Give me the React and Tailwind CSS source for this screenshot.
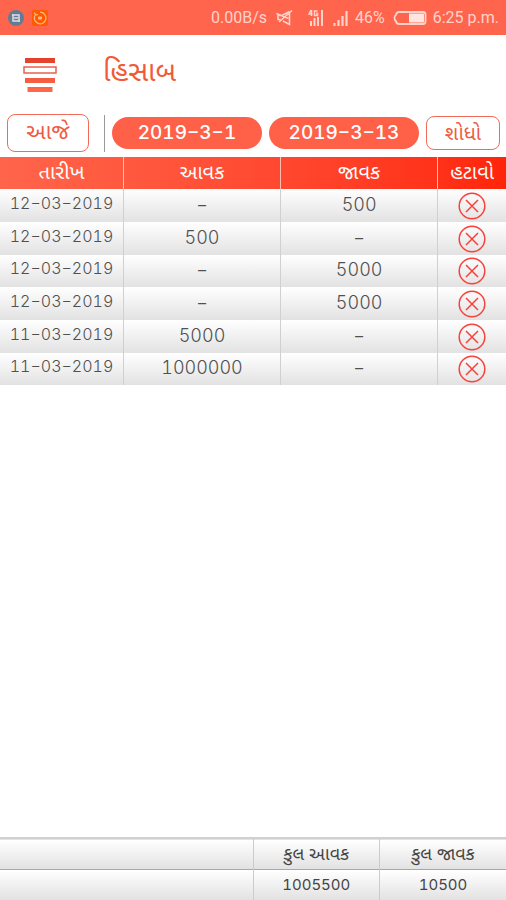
import React, { useState } from 'react';

const ENTRIES = [
  { id: 1, date: '12−03−2019', income: '−', expense: '500' },
  { id: 2, date: '12−03−2019', income: '500', expense: '−' },
  { id: 3, date: '12−03−2019', income: '−', expense: '5000' },
  { id: 4, date: '12−03−2019', income: '−', expense: '5000' },
  { id: 5, date: '11−03−2019', income: '5000', expense: '−' },
  { id: 6, date: '11−03−2019', income: '1000000', expense: '−' },
];

function sum(rows, key) {
  return rows.reduce((total, row) => total + (Number(row[key]) || 0), 0);
}

function StatusBar() {
  return (
    <div className="flex h-[35px] items-center bg-[#ff654d] pl-2 pr-[7px] pt-px font-[Roboto,sans-serif] text-base text-[#ffd3cb]">
      <svg className="h-4 w-4" viewBox="0 0 16 16" aria-hidden="true">
        <circle cx="8" cy="8" r="8" fill="#607d94" />
        <path d="M5 4v7h7M4 5h7v7M6 8h4" fill="none" stroke="#e3dce2" strokeWidth="1.5" />
      </svg>
      <svg className="ml-2 h-4 w-4" viewBox="0 0 16 16" aria-hidden="true">
        <rect width="16" height="16" rx="2" fill="#ff5a00" />
        <path d="M3.500 4.500A5.800 5.800 0 1 0 8 2.200M2.500 2.500l1 2.500 2.500-.5" fill="none" stroke="#ffb98c" strokeWidth="1.200" />
        <rect x="6" y="6.500" width="4" height="3" rx="1" fill="#ffb98c" />
      </svg>
      <span className="ml-auto">0.00B/s</span>
      <svg className="ml-2 h-[18px] w-[18px]" viewBox="0 0 18 18" fill="none" stroke="currentColor" strokeWidth="1.500" aria-hidden="true">
        <path d="M14.500 2.500v13L8 12M14.500 2.500L7 6.500H3v4h2.500M1.500 4.500l12 5M17 1.500L4 13" />
      </svg>
      <svg className="ml-[15px] h-[18px] w-4" viewBox="0 0 16 18" fill="none" stroke="currentColor" aria-hidden="true">
        <path d="M3 1L1 5h3.5M3.5 1v6M9.500 2H6.500v4.500h3V4.500H8" strokeWidth="1.500" />
        <path d="M3 12v5M6.500 9v8M10 8v9M14 1v16" strokeWidth="2" />
      </svg>
      <svg className="ml-[9px] h-[18px] w-4" viewBox="0 0 16 18" stroke="currentColor" strokeWidth="2.200" aria-hidden="true">
        <path d="M1.500 14v3M5.500 11v6M9.500 7v10M13.500 2v15" />
      </svg>
      <span className="ml-[6px]">46%</span>
      <svg className="ml-2 h-4 w-[34px]" viewBox="0 0 34 16" aria-hidden="true">
        <path d="M6 2h24q2.500 0 2.500 2.500v7q0 2.500-2.500 2.500H6q-2.500 0-3-3Q1.500 10.500 1.500 8T3 5q.5-3 3-3z" fill="none" stroke="currentColor" strokeWidth="1.800" />
        <path d="M16 3.500h15v9H16z" fill="#ffe5e0" />
      </svg>
      <span className="ml-[6px]">6:25 p.m.</span>
    </div>
  );
}

function DeleteIcon() {
  return (
    <svg className="h-7 w-7" viewBox="0 0 28 28" fill="none" stroke="#f8413c" strokeWidth="1.5" aria-hidden="true">
      <circle cx="14" cy="14" r="12.8" />
      <path d="M8 8l12 12M20 8L8 20" />
    </svg>
  );
}

export default function App() {
  const [entries, setEntries] = useState(ENTRIES);

  const removeEntry = (id) => setEntries(entries.filter((e) => e.id !== id));

  return (
    <div className="flex min-h-screen flex-col bg-white font-[Inter,'Noto_Sans_Gujarati','Lohit_Gujarati',sans-serif] tabular-nums">
      <StatusBar />

      <header className="flex h-[79px] items-center pl-[23px]">
        <button type="button" aria-label="Menu">
          <svg className="h-9 w-[34px]" viewBox="0 0 34 36" aria-hidden="true">
            <defs>
              <linearGradient id="menu" x1="0" y1="0" x2="0" y2="1">
                <stop offset="0" stopColor="#e2402a" />
                <stop offset="1" stopColor="#ff6a4b" />
              </linearGradient>
            </defs>
            <path d="M2 1h30v5H2zM2 21h30v5H2zM4.500 30h25v5h-25z" fill="url(#menu)" />
            <path d="M1 10h32v6H1z" fill="none" stroke="#e8604c" strokeWidth="1.500" />
          </svg>
        </button>
        <h1 className="ml-[46px] pb-2 text-[28px] leading-8 text-[#f15a38]">હિસાબ</h1>
      </header>

      {/* Date filters */}
      <div className="flex items-center gap-[7px] pr-[6px] pb-[5px] pl-[7px]">
        <button type="button" className="h-[38px] w-[82px] rounded-lg border border-[#f26a58] pb-1 text-[22px] leading-8 text-[#ef5a42]">
          આજે
        </button>
        <div className="ml-2 h-[37px] w-px bg-[#999999]" />
        <button type="button" className="h-8 flex-1 rounded-full bg-[#ff6048] text-[19px] leading-8 font-medium text-white">
          2019−3−1
        </button>
        <button type="button" className="h-8 flex-1 rounded-full bg-[#ff6048] text-[19px] leading-8 font-medium text-white">
          2019−3−13
        </button>
        <button type="button" className="h-[34px] w-[74px] rounded-lg border border-[#f26a58] text-xl leading-7 text-[#ef5a42]">
          શોધો
        </button>
      </div>

      <table className="w-full table-fixed border-collapse text-center">
        <thead>
          <tr className="h-8 bg-linear-to-r from-[#ff654b] to-[#ff2408] text-xl leading-6 text-white">
            <th className="w-[24.4%] border-r border-[#ffc0b4] p-0 pb-0.5 font-normal">તારીખ</th>
            <th className="border-r border-[#ffc0b4] p-0 pb-0.5 font-normal">આવક</th>
            <th className="border-r border-[#ffc0b4] p-0 pb-0.5 font-normal">જાવક</th>
            <th className="w-[13.5%] p-0 pb-0.5 font-normal">હટાવો</th>
          </tr>
        </thead>
        <tbody>
          {entries.map((entry) => (
            <tr key={entry.id} className="h-[33px] bg-linear-to-b from-white to-[#e2e2e2] text-lg leading-6 font-light text-[#505050] nth-[3n]:h-8">
              <td className="border-r border-[#d0d0d0] p-0 pb-1.5 text-base">{entry.date}</td>
              <td className="border-r border-[#d0d0d0] p-0 pb-0.5">{entry.income}</td>
              <td className="border-r border-[#d0d0d0] p-0 pb-0.5">{entry.expense}</td>
              <td className="p-0">
                <button type="button" aria-label="હટાવો" className="mx-auto block" onClick={() => removeEntry(entry.id)}>
                  <DeleteIcon />
                </button>
              </td>
            </tr>
          ))}
        </tbody>
      </table>

      {/* Totals */}
      <table className="mt-auto w-full table-fixed border-collapse text-center leading-6 text-[#444444]">
        <tbody>
          <tr className="h-[31px] border-t-2 border-[#d0d0d0] bg-linear-to-b from-white to-[#e2e2e2] text-lg leading-6">
            <td className="w-1/2 border-r border-[#cccccc] p-0"></td>
            <th className="border-r border-[#cccccc] p-0 font-normal">કુલ આવક</th>
            <th className="p-0 font-normal">કુલ જાવક</th>
          </tr>
          <tr className="h-[31px] border-t border-[#a8a8a8] bg-linear-to-b from-white to-[#e2e2e2] text-[15px] leading-6">
            <td className="border-r border-[#cccccc] p-0"></td>
            <td className="border-r border-[#cccccc] p-0">{sum(entries, 'income')}</td>
            <td className="p-0">{sum(entries, 'expense')}</td>
          </tr>
        </tbody>
      </table>
    </div>
  );
}
